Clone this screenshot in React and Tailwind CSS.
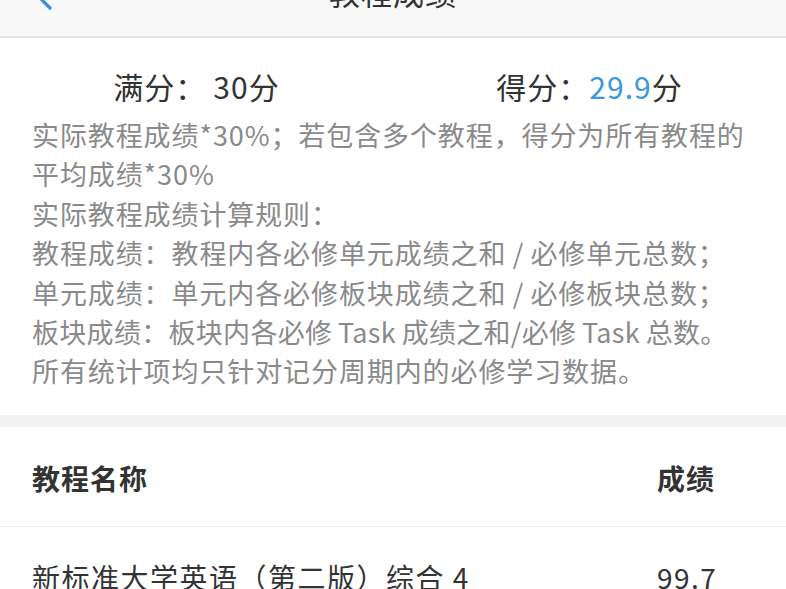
import React from "react";

export default function App() {
  const font = { fontFamily: '"Noto Sans CJK SC", "Noto Sans", sans-serif' };
  return (
    <div className="w-[786px] h-[589px] overflow-hidden bg-white text-[#333]" style={font}>
      <div className="relative -mt-[50px] h-[88px] bg-[#f8f8f8] border-b-2 border-[#e4e4e4] flex items-center justify-center">
        <svg className="absolute left-[22px] top-[30px]" width="40" height="40" viewBox="0 0 40 40">
          <polyline points="28,0 14,14 28,28" fill="none" stroke="#3a8ee0" strokeWidth="3.2" strokeLinecap="round" strokeLinejoin="round" />
        </svg>
        <span className="text-[31px] leading-none mt-[-4px] tracking-[1px]">教程成绩</span>
      </div>
      <div className="pt-[28px] grid grid-cols-2 text-[30px] leading-[40px] tracking-[1px]">
        <div className="text-center">满分：{"\u2009"}30分</div>
        <div className="text-center">
          得分：<span className="text-[#3b99e0]">29.9</span>分
        </div>
      </div>
      <div className="px-[32px] pt-[9px] pb-[24px] text-[27px] leading-[39.4px] tracking-[0.9px] text-[#8a8a8a] whitespace-nowrap">
        实际教程成绩*30%；若包含多个教程，得分为所有教程的
        <br />
        平均成绩*30%
        <br />
        实际教程成绩计算规则：
        <br />
        教程成绩：教程内各必修单元成绩之和{"\u2009"}/{"\u2009"}必修单元总数；
        <br />
        单元成绩：单元内各必修板块成绩之和{"\u2009"}/{"\u2009"}必修板块总数；
        <br />
        <span className="tracking-[0.3px]">板块成绩：板块内各必修{"\u2009"}Task{"\u2009"}成绩之和/必修{"\u2009"}Task{"\u2009"}总数。</span>
        <br />
        所有统计项均只针对记分周期内的必修学习数据。
      </div>
      <div className="h-[12px] bg-[#f2f2f2]" />
      <div className="flex items-center h-[100px] pl-[32px] border-b border-[#ececec] text-[28px] font-bold tracking-[1px]">
        <div className="flex-1 pt-[4px]">教程名称</div>
        <div className="w-[129px] pt-[4px]">成绩</div>
      </div>
      <div className="flex items-center h-[100px] pl-[32px] text-[28px] tracking-[1.5px]">
        <div className="flex-1">新标准大学英语（第二版）综合 4</div>
        <div className="w-[129px]">99.7</div>
      </div>
    </div>
  );
}
